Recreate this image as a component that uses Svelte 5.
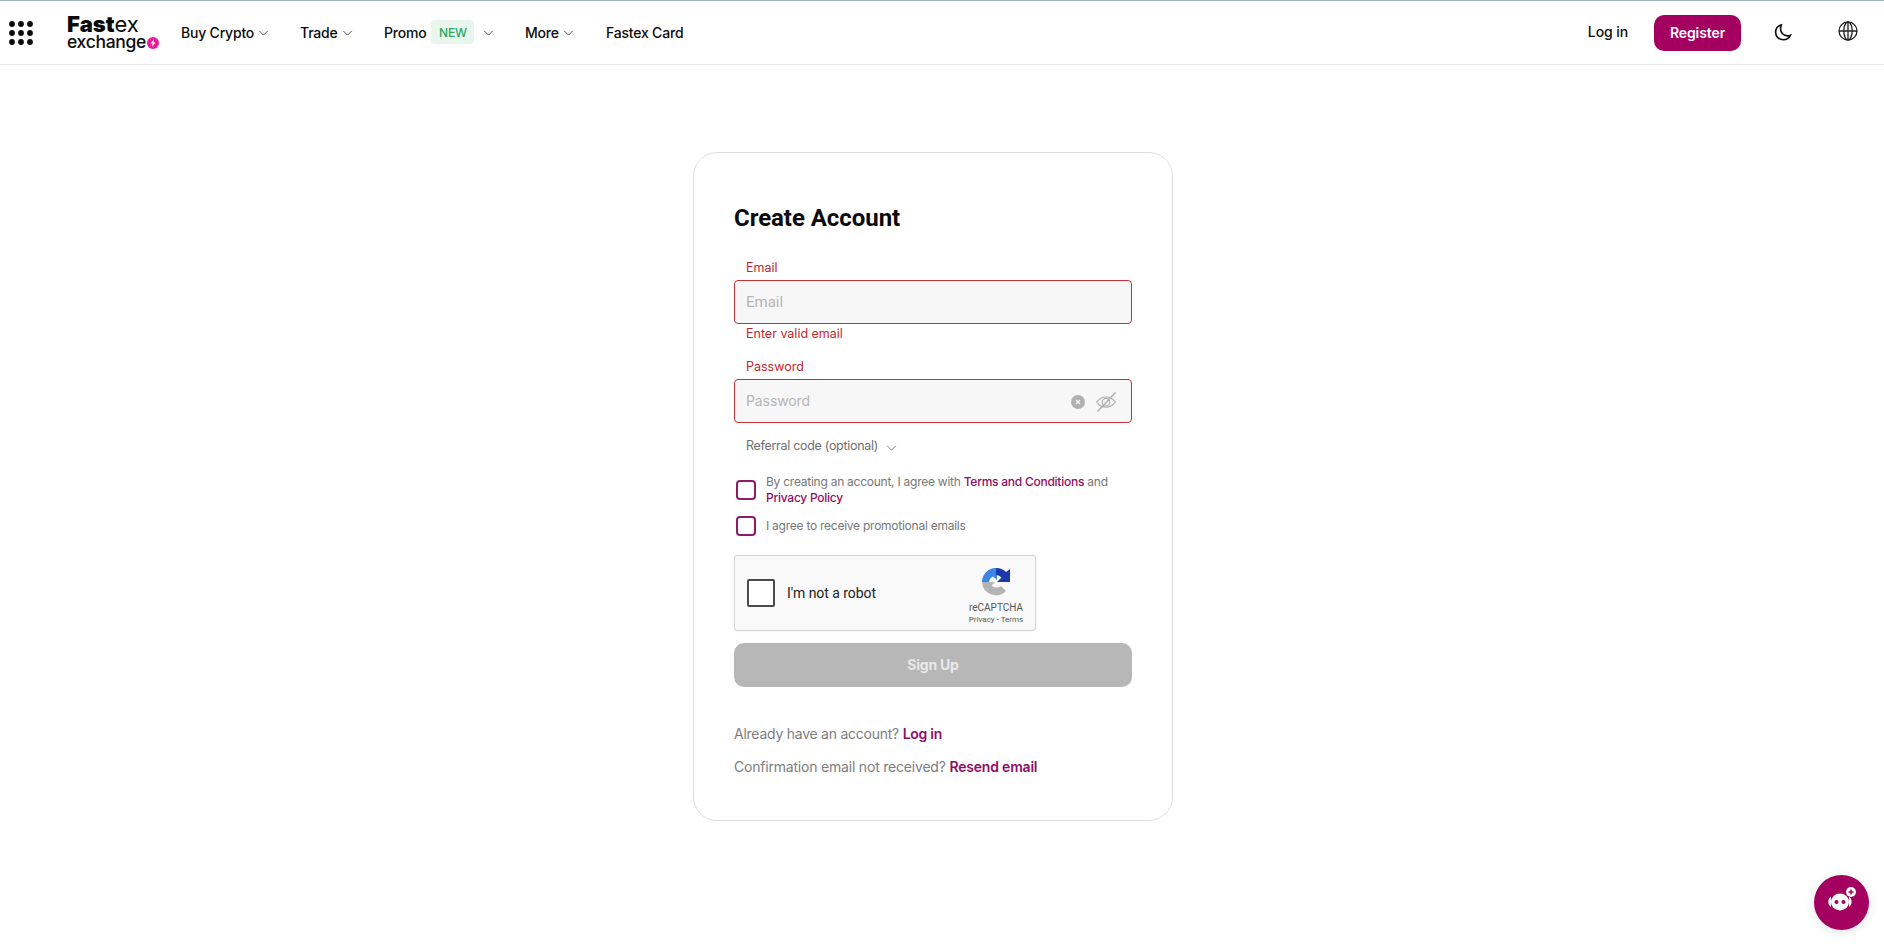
<script>
  const nav = [
    { label: 'Buy Crypto', cls: 'buy', chevron: true },
    { label: 'Trade', cls: 'trade', chevron: true },
    { label: 'Promo', cls: 'promo', chevron: true, badge: 'NEW' },
    { label: 'More', cls: 'more', chevron: true },
    { label: 'Fastex Card', cls: 'card-link', chevron: false }
  ];
  const dots = [];
  for (let r = 0; r < 3; r++) for (let c = 0; c < 3; c++) dots.push([4 + c * 9, 4 + r * 9]);
</script>

{#snippet chevron(cls)}
  <svg class={cls} viewBox="0 0 12 7" fill="none" stroke="currentColor" stroke-width="1"><path d="M1 1l5 5 5-5" /></svg>
{/snippet}

<div class="page">
  <header class="header">
    <svg class="apps" viewBox="0 0 26 26">
      {#each dots as d}<circle cx={d[0]} cy={d[1]} r="2.9" fill="#0b0b0b" />{/each}
    </svg>
    <div class="logo">
      <div class="logo-top"><b>Fast</b>ex</div>
      <div class="logo-bottom">exchange<svg class="bolt" viewBox="0 0 12 12"><circle cx="6" cy="6" r="6" fill="#ec1c99" /><path d="M7 2L3.600 6.600h2L5 10l3.400-4.600h-2z" fill="#fff" /></svg></div>
    </div>
    <nav class="nav">
      {#each nav as item}
        <span class="nav-item {item.cls}">
          {item.label}
          {#if item.badge}<span class="badge">{item.badge}</span>{/if}
          {#if item.chevron}{@render chevron('chev')}{/if}
        </span>
      {/each}
    </nav>
    <div class="right">
      <span class="login">Log in</span>
      <span class="register">Register</span>
      <svg class="moon" viewBox="0 0 20 20" fill="none" stroke="#0b0b0b" stroke-width="1.7"><path d="M7.600 2C4 3.100 1.700 6 1.700 9.700c0 4.500 3.600 8 8.100 8 3.300 0 6.200-1.900 7.500-4.800-1 .4-2 .6-3 .6-4.300 0-7.400-3.200-7.400-7.400 0-1.400.3-2.800.7-4.100z" /></svg>
      <svg class="globe" viewBox="0 0 20 20" fill="none" stroke="#222" stroke-width="1.3"><circle cx="10" cy="10" r="9" /><ellipse cx="10" cy="10" rx="4.200" ry="9" /><path d="M1 10h18M10 1v18" /></svg>
    </div>
  </header>

  <main class="main">
    <section class="card">
      <h1>Create Account</h1>

      <label class="label" for="email">Email</label>
      <div class="input"><span class="ph em" id="email">Email</span></div>
      <div class="error">Enter valid email</div>

      <label class="label pw" for="password">Password</label>
      <div class="input">
        <span class="ph" id="password">Password</span>
        <svg class="clear" viewBox="0 0 14 14"><circle cx="7" cy="7" r="7" fill="#b0b0b0" /><path d="M5 5l4 4M9 5l-4 4" stroke="#f6f6f6" stroke-width="1.2" /></svg>
        <svg class="eye" viewBox="0 0 20 20" fill="none" stroke="#b0b0b0" stroke-width="1.2"><path d="M.8 10.200C3 6.800 6.200 5 10 5s7 1.800 9.200 5.200c-2.200 3.300-5.400 5-9.200 5s-7-1.700-9.200-5z" /><circle cx="10" cy="10.200" r="3.800" /><path d="M1.500 19.500L19.500.5" stroke-width="1.5" /></svg>
      </div>

      <div class="referral">Referral code (optional) {@render chevron('chev ref')}</div>

      <div class="check first">
        <span class="box"></span>
        <p>By creating an account, I agree with <a href="#t">Terms and Conditions</a> and <a href="#p">Privacy Policy</a></p>
      </div>
      <div class="check second">
        <span class="box"></span>
        <p>I agree to receive promotional emails</p>
      </div>

      <div class="captcha">
        <span class="cbox"></span>
        <span class="robot">I'm not a robot</span>
        <div class="brand">
          <svg class="rc" viewBox="0 0 28 28">
            <path d="M0 14A14 14 0 0 1 15 0V12L11 8.500A7 7 0 0 0 7 14Z" fill="#3d86e6" />
            <path d="M14 0A14 14 0 0 1 24 4L28 1V14H15L19.500 9.500A7 7 0 0 0 14 7Z" fill="#1c3aa9" />
            <path d="M0 14H13L9.500 17.500A7 7 0 0 0 19 18L24 23A14 14 0 0 1 0 14Z" fill="#b4b4b4" />
          </svg>
          <span class="rc-name">reCAPTCHA</span>
          <span class="rc-links">Privacy - Terms</span>
        </div>
      </div>

      <button class="signup" type="button">Sign Up</button>

      <p class="foot one">Already have an account? <a href="#l">Log in</a></p>
      <p class="foot two">Confirmation email not received? <a href="#r">Resend email</a></p>
    </section>
  </main>

  <button class="fab" type="button" aria-label="Chat">
    <svg viewBox="0 0 34 30">
      <path d="M6 10.500C2.500 12.500 2.500 19 6 21zM24 10.500c3.500 2 3.500 8.500 0 10.500z" fill="#fff" />
      <ellipse cx="15" cy="16" rx="9" ry="8.500" fill="#fff" />
      <circle cx="11.500" cy="16" r="2" fill="#a4005f" />
      <circle cx="18.500" cy="16" r="2" fill="#a4005f" />
      <circle cx="26" cy="6" r="5" fill="#fff" />
      <path d="M26 3.500v5M23.500 6h5" stroke="#a4005f" stroke-width="1.5" />
    </svg>
  </button>
</div>

<style>
  :global(body) { margin: 0; background: #fff; font-family: Inter, "Liberation Sans", sans-serif; }
  .page { min-height: 948px; box-sizing: border-box; border-top: 1px solid #9db7ba; overflow: hidden; }
  .header { height: 63px; border-bottom: 1px solid #e9e9e9; display: flex; align-items: center; color: #0b0b0b; }
  .apps { width: 26px; height: 26px; margin-left: 8px; flex: none; }
  .logo { margin-left: 33px; width: 93px; margin-top: -1px; }
  .logo-top { font-size: 22px; line-height: 19px; font-weight: 400; }
  .logo-top b { font-weight: 900; }
  .logo-bottom { font-size: 17.5px; line-height: 16px; font-weight: 500; display: flex; align-items: center; white-space: nowrap; letter-spacing: -0.3px; }
  .bolt { width: 12px; height: 12px; margin-left: 1px; flex: none; margin-top: 2px; }
  .nav { display: flex; align-items: center; margin-left: 21px; margin-top: -1px; }
  .nav-item { display: flex; align-items: center; font-size: 14px; font-weight: 500; white-space: nowrap; letter-spacing: -0.2px; }
  .chev { width: 11px; height: 6px; margin-left: 4px; color: #333; flex: none; margin-top: 2px; }
  .buy { width: 119px; }
  .trade { width: 84px; }
  .promo { width: 141px; }
  .more { width: 81px; }
  .badge { width: 43px; height: 24px; margin-left: 5px; margin-right: 5px; border-radius: 4px; background: #e9f6ee; color: #2fa55f; font-size: 12px; display: flex; align-items: center; justify-content: center; font-weight: 500; }
  .right { margin-left: auto; display: flex; align-items: center; }
  .login { font-size: 14px; font-weight: 500; margin-right: 26px; letter-spacing: -0.1px; margin-top: -2px; }
  .register { width: 87px; height: 36px; border-radius: 10px; background: #a4005f; color: #fff; font-size: 14px; font-weight: 600; display: flex; align-items: center; justify-content: center; letter-spacing: -0.1px; }
  .moon { width: 19px; height: 19px; margin-left: 33px; margin-top: 0; }
  .globe { width: 20px; height: 20px; margin-left: 45px; margin-right: 26px; margin-top: -4px; }

  .main { display: flex; justify-content: center; padding-top: 87px; padding-right: 18px; }
  .card { width: 480px; height: 669px; box-sizing: border-box; border: 1px solid #dfdfdf; border-radius: 24px; padding: 51px 40px 0; }
  h1 { margin: 0 0 28px; font: 700 24px/28px Roboto, sans-serif; color: #0b0b0b; letter-spacing: -0.05px; }
  .label { display: block; margin-left: 12px; font-size: 12.5px; line-height: 16px; color: #c4262e; height: 20px; }
  .label.pw { margin-top: 17px; }
  .input { height: 44px; box-sizing: border-box; border: 1px solid #c4333a; border-radius: 4px; background: #f7f7f7; display: flex; align-items: center; padding: 0 11px; }
  .ph { font: 400 14px/18px Inter, sans-serif; color: #b5b5b5; flex: 1; letter-spacing: -0.1px; }
  .ph.em { font: 400 15px/18px Roboto, sans-serif; letter-spacing: 0; margin-top: -1px; }
  .clear { width: 14px; height: 14px; margin-right: 11px; margin-top: 1px; }
  .eye { width: 20px; height: 20px; margin-right: 4px; margin-top: 1px; }
  .error { margin: 2px 0 0 12px; font-size: 12.5px; line-height: 16px; color: #c4262e; }
  .referral { display: flex; align-items: center; margin: 15px 0 0 12px; font-size: 12.5px; line-height: 16px; color: #6f6f6f; letter-spacing: -0.3px; }
  .ref { margin-left: 8px; color: #777; margin-top: 3px; }
  .check { display: flex; margin-left: 2px; }
  .check p { margin: 0 0 0 10px; font-size: 12px; line-height: 16px; color: #777; letter-spacing: -0.25px; width: 360px; }
  .check a { color: #8f0d63; text-decoration: none; font-weight: 500; }
  .foot a { color: #8f0d63; text-decoration: none; font-weight: 600; }
  .first { margin-top: 20px; align-items: center; }
  .second { margin-top: 10px; align-items: center; }
  .box { width: 20px; height: 20px; box-sizing: border-box; border: 2px solid #8f1a68; border-radius: 4px; flex: none; }
  .captcha { width: 302px; height: 76px; margin-top: 19px; box-sizing: border-box; border: 1px solid #d6d6d6; border-radius: 3px; background: #f9f9f9; box-shadow: 0 0 3px rgba(0,0,0,.08); display: flex; align-items: center; }
  .cbox { width: 28px; height: 28px; margin-left: 12px; box-sizing: border-box; border: 2px solid #4a4a4a; border-radius: 2px; background: #fff; flex: none; }
  .robot { margin-left: 12px; font: 400 14px/18px Roboto, sans-serif; color: #222; letter-spacing: -0.05px; }
  .brand { margin-left: auto; width: 60px; margin-right: 9px; align-self: flex-start; padding-top: 12px; display: flex; flex-direction: column; align-items: center; color: #555; }
  .rc { width: 28px; height: 28px; margin-bottom: 1px; }
  .rc-name { font: 400 10px/12px Roboto, sans-serif; margin-top: 5px; }
  .rc-links { font: 400 8px/10px Roboto, sans-serif; margin-top: 1px; white-space: nowrap; }
  .signup { display: block; width: 398px; height: 44px; margin-top: 12px; border: 0; border-radius: 10px; background: #b7b7b7; color: #e8e8e8; font: 700 14px Inter, sans-serif; letter-spacing: -0.2px; padding: 0 0 2px; }
  .foot { margin: 0; font-size: 14px; line-height: 18px; color: #7d7d7d; letter-spacing: -0.2px; }
  .one { margin-top: 38px; letter-spacing: -0.25px; }
  .two { margin-top: 15px; }
  .fab { position: fixed; left: 1814px; top: 875px; width: 55px; height: 55px; padding: 0; border: 0; border-radius: 50%; background: #a4005f; box-shadow: 0 2px 10px rgba(0,0,0,.12); display: flex; align-items: center; justify-content: center; }
  .fab svg { width: 34px; height: 30px; margin-top: -3px; }
</style>
